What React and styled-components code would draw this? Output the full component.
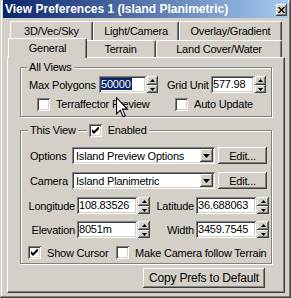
import React from "react";
import styled, { createGlobalStyle, css } from "styled-components";

const face = "#D4D0C8";
const shadow = "#808080";
const dark = "#404040";

const raised = css`
  box-shadow: inset -1px -1px ${dark}, inset 1px 1px #fff,
    inset -2px -2px ${shadow}, inset 2px 2px ${face};
`;
const sunken = css`
  box-shadow: inset 1px 1px ${shadow}, inset -1px -1px #fff,
    inset 2px 2px ${dark}, inset -2px -2px ${face};
`;

const GlobalStyle = createGlobalStyle`
  html, body {
    margin: 0;
    padding: 0;
    background: ${face};
  }
  body {
    font-family: "Liberation Sans", Arial, sans-serif;
    font-size: 11px;
    letter-spacing: -0.2px;
    color: #000;
  }
  * {
    box-sizing: border-box;
  }
`;

const Window = styled.div`
  width: 291px;
  height: 298px;
  padding: 0 3px;
  background: ${face};
  box-shadow: inset -1px -1px ${dark}, inset 1px 1px ${face},
    inset -2px -2px ${shadow}, inset 2px 2px #fff;
  display: flex;
  flex-direction: column;
`;

const TitleBar = styled.div`
  height: 18px;
  flex: none;
  display: flex;
  justify-content: space-between;
  padding: 0 1px 0 2px;
  background: linear-gradient(to right, #0a246a, #a6caf0);
  color: #fff;
  font-weight: bold;
  font-size: 12px;
  letter-spacing: 0;
  line-height: 18px;
  white-space: nowrap;
`;

const CloseButton = styled.div`
  width: 11px;
  height: 12px;
  margin-top: 4px;
  background: ${face};
  ${raised};
  display: flex;
  align-items: center;
  justify-content: center;
`;

const Body = styled.div`
  display: flex;
  flex-direction: column;
  padding: 3px 3px 0 4px;
`;

const TabRow = styled.div`
  display: flex;
  height: ${(p) => p.$h}px;
  padding-left: 3px;
`;

const Tab = styled.div`
  flex: none;
  width: ${(p) => p.$w}px;
  height: 100%;
  display: flex;
  align-items: center;
  justify-content: center;
  background: ${face};
  border-top: 1px solid #fff;
  border-left: 1px solid #fff;
  border-right: 1px solid ${dark};
  box-shadow: inset -1px 0 ${shadow};
  border-radius: 2px 2px 0 0;
  white-space: nowrap;
  ${(p) =>
    p.$active &&
    css`
      position: relative;
      z-index: 1;
      width: ${p.$w + 4}px;
      height: calc(100% + 3px);
      margin: -2px -2px -1px;
      padding-bottom: 2px;
    `}
`;

const Panel = styled.div`
  height: 236px;
  background: ${face};
  border-top: 1px solid #fff;
  border-left: 1px solid #fff;
  border-right: 1px solid ${dark};
  border-bottom: 1px solid ${dark};
  box-shadow: inset -1px -1px ${shadow};
  padding: 9px 12px 0 12px;
  display: flex;
  flex-direction: column;
`;

const Group = styled.div`
  position: relative;
  flex: none;
  height: ${(p) => p.$h}px;
  margin-top: ${(p) => p.$mt || 0}px;
  border: 1px solid ${shadow};
  box-shadow: inset 1px 1px #fff, 1px 1px #fff;
  padding: ${(p) => p.$pt}px 0 0 ${(p) => p.$pl}px;
  display: flex;
  flex-direction: column;
`;

const Legend = styled.div`
  position: absolute;
  top: -7px;
  left: ${(p) => p.$left}px;
  height: 13px;
  display: flex;
  align-items: center;
  gap: ${(p) => p.$gap || 0}px;
`;

const LegendPiece = styled.div`
  display: flex;
  align-items: center;
  gap: 6px;
  height: 13px;
  padding: 0 2px;
  background: ${face};
  line-height: 13px;
  white-space: nowrap;
`;

const Row = styled.div`
  display: flex;
  align-items: center;
  height: ${(p) => p.$h || 17}px;
  margin-top: ${(p) => p.$mt || 0}px;
  margin-left: ${(p) => p.$ml || 0}px;
`;

const Label = styled.div`
  flex: none;
  width: ${(p) => p.$w}px;
  margin-left: ${(p) => p.$ml || 0}px;
  margin-right: ${(p) => p.$mr || 0}px;
  text-align: ${(p) => (p.$right ? "right" : "left")};
  white-space: nowrap;
`;

const Field = styled.div`
  flex: none;
  width: ${(p) => p.$w}px;
  height: 17px;
  background: #fff;
  ${sunken};
  padding: 2px 2px 2px 2px;
  line-height: 13px;
  white-space: nowrap;
  overflow: hidden;
`;

const Selected = styled.span`
  background: #0a246a;
  color: #fff;
  padding-right: 1px;
`;

const Spinner = styled.div`
  flex: none;
  width: ${(p) => p.$w}px;
  height: 17px;
  margin-left: 1px;
  display: flex;
  flex-direction: column;
`;

const SpinHalf = styled.div`
  height: ${(p) => p.$h}px;
  background: ${face};
  ${raised};
  display: flex;
  align-items: center;
  justify-content: center;
`;

const Combo = styled.div`
  flex: none;
  width: 143px;
  height: 17px;
  background: #fff;
  ${sunken};
  padding: 2px;
  display: flex;
  align-items: center;
`;

const ComboText = styled.div`
  flex: 1;
  padding-left: 2px;
  white-space: nowrap;
`;

const DropButton = styled.div`
  flex: none;
  width: 13px;
  height: 13px;
  background: ${face};
  ${raised};
  display: flex;
  align-items: center;
  justify-content: center;
`;

const Button = styled.div`
  flex: none;
  width: ${(p) => p.$w}px;
  height: ${(p) => p.$h || 17}px;
  margin-left: ${(p) => p.$ml || 0}px;
  background: ${face};
  ${raised};
  display: flex;
  align-items: center;
  justify-content: center;
  white-space: nowrap;
  font-size: ${(p) => (p.$big ? 12 : 11)}px;
`;

const CheckItem = styled.div`
  flex: none;
  width: ${(p) => (p.$w ? `${p.$w}px` : "auto")};
  display: flex;
  align-items: center;
  gap: 6px;
  white-space: nowrap;
`;

const Box = styled.div`
  flex: none;
  width: 13px;
  height: 13px;
  background: #fff;
  ${sunken};
  display: flex;
  align-items: center;
  justify-content: center;
`;

const ButtonRow = styled.div`
  display: flex;
  justify-content: flex-end;
  padding-right: 7px;
  margin-top: 4px;
`;

const Cursor = styled.svg`
  position: absolute;
  left: ${(p) => p.$x}px;
  top: ${(p) => p.$y}px;
  z-index: 3;
`;

const Arrow = ({ up }) => (
  <svg width="5" height="3" viewBox="0 0 5 3">
    <polygon points={up ? "2.5,0 5,3 0,3" : "0,0 5,0 2.5,3"} fill="#000" />
  </svg>
);

const Spin = ({ w }) => (
  <Spinner $w={w}>
    <SpinHalf $h={9}>
      <Arrow up />
    </SpinHalf>
    <SpinHalf $h={8}>
      <Arrow />
    </SpinHalf>
  </Spinner>
);

const Check = ({ checked }) => (
  <Box>
    {checked && (
      <svg width="7" height="7" viewBox="0 0 7 7">
        <path d="M0 2 L2 4 L7 -1 L7 2 L2 7 L0 5 Z" fill="#000" />
      </svg>
    )}
  </Box>
);

const Select = ({ children }) => (
  <Combo>
    <ComboText>{children}</ComboText>
    <DropButton>
      <svg width="7" height="4" viewBox="0 0 7 4">
        <polygon points="0,0 7,0 3.5,4" fill="#000" />
      </svg>
    </DropButton>
  </Combo>
);

export default function App() {
  return (
    <>
      <GlobalStyle />
      <Window>
        <TitleBar>
          <span>View Preferences 1 (Island Planimetric)</span>
          <CloseButton>
            <svg width="7" height="6" viewBox="0 0 7 6">
              <path d="M0.5 0 L6.5 6 M6.5 0 L0.5 6" stroke="#000" strokeWidth="1.4" />
            </svg>
          </CloseButton>
        </TitleBar>
        <Body>
          <TabRow $h={19}>
            <Tab $w={83}>3D/Vec/Sky</Tab>
            <Tab $w={86}>Light/Camera</Tab>
            <Tab $w={103}>Overlay/Gradient</Tab>
          </TabRow>
          <TabRow $h={17}>
            <Tab $w={75} $active>
              General
            </Tab>
            <Tab $w={71}>Terrain</Tab>
            <Tab $w={126}>Land Cover/Water</Tab>
          </TabRow>
          <Panel>
            <Group $h={50} $pt={8} $pl={8}>
              <Legend $left={6}>
                <LegendPiece>All Views</LegendPiece>
              </Legend>
              <Row>
                <Label $w={70}>Max Polygons</Label>
                <Field $w={47}>
                  <Selected>50000</Selected>
                </Field>
                <Spin w={11} />
                <Label $w={44} $ml={9}>
                  Grid Unit
                </Label>
                <Field $w={43}>577.98</Field>
                <Spin w={11} />
              </Row>
              <Row $h={14} $mt={4} $ml={8}>
                <CheckItem $w={138}>
                  <Check />
                  Terraffector Preview
                </CheckItem>
                <CheckItem>
                  <Check />
                  Auto Update
                </CheckItem>
              </Row>
              <Cursor $x={95} $y={29} width="13" height="21" viewBox="0 0 12 19">
                <path
                  d="M0.5 0.5 L0.5 15.5 L4 12 L6.5 18 L8.5 17 L6 11 L10.5 11 Z"
                  fill="#fff"
                  stroke="#000"
                  strokeWidth="1"
                />
              </Cursor>
            </Group>
            <Group $h={134} $mt={13} $pt={16} $pl={9}>
              <Legend $left={7} $gap={9}>
                <LegendPiece>This View</LegendPiece>
                <LegendPiece>
                  <Check checked />
                  Enabled
                </LegendPiece>
              </Legend>
              <Row>
                <Label $w={42}>Options</Label>
                <Select>Island Preview Options</Select>
                <Button $w={49} $ml={3}>
                  Edit...
                </Button>
              </Row>
              <Row $mt={8}>
                <Label $w={42}>Camera</Label>
                <Select>Island Planimetric</Select>
                <Button $w={49} $ml={3}>
                  Edit...
                </Button>
              </Row>
              <Row $mt={8} $ml={-2}>
                <Label $w={47} $mr={2} $right>
                  Longitude
                </Label>
                <Field $w={60}>108.83526</Field>
                <Spin w={12} />
                <Label $w={44} $mr={2} $right>
                  Latitude
                </Label>
                <Field $w={60}>36.688063</Field>
                <Spin w={12} />
              </Row>
              <Row $mt={7} $ml={-2}>
                <Label $w={47} $mr={2} $right>
                  Elevation
                </Label>
                <Field $w={60}>8051m</Field>
                <Spin w={12} />
                <Label $w={44} $mr={2} $right>
                  Width
                </Label>
                <Field $w={60}>3459.7545</Field>
                <Spin w={12} />
              </Row>
              <Row $h={13} $mt={8} $ml={-2}>
                <CheckItem $w={88}>
                  <Check checked />
                  Show Cursor
                </CheckItem>
                <CheckItem>
                  <Check />
                  Make Camera follow Terrain
                </CheckItem>
              </Row>
            </Group>
            <ButtonRow>
              <Button $w={122} $h={20} $big>
                Copy Prefs to Default
              </Button>
            </ButtonRow>
          </Panel>
        </Body>
      </Window>
    </>
  );
}
